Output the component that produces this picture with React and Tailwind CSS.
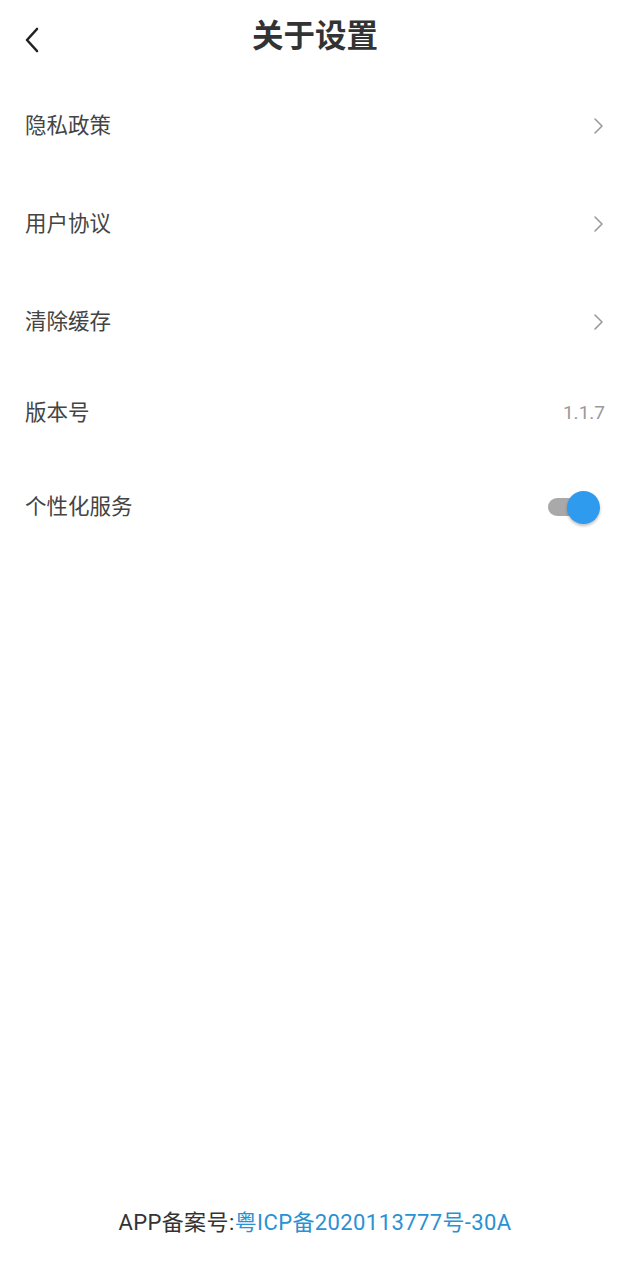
import React, { useState } from "react";

function Chevron() {
  return (
    <svg width="12" height="18" viewBox="0 0 12 18" fill="none">
      <path d="M2 2 L9 9 L2 16" stroke="#9a9a9a" strokeWidth="1.6" strokeLinecap="round" strokeLinejoin="round" />
    </svg>
  );
}

function App() {
  const [on, setOn] = useState(true);

  const links = ["隐私政策", "用户协议", "清除缓存"];

  return (
    <div
      className="w-[630px] min-h-[1280px] bg-white flex flex-col"
      style={{ fontFamily: 'Roboto, "Noto Sans CJK SC", sans-serif' }}
    >
      {/* header */}
      <div className="h-[77px] relative flex items-center justify-center">
        <button className="absolute left-[22px] top-[26px]">
          <svg width="20" height="28" viewBox="0 0 20 28" fill="none">
            <path d="M15 3 L5 14 L15 25" stroke="#222" strokeWidth="2.6" strokeLinecap="round" strokeLinejoin="round" />
          </svg>
        </button>
        <h1 className="text-[31.5px] font-bold text-[#333333] -mt-[3px]">关于设置</h1>
      </div>

      {links.map((t) => (
        <div key={t} className="h-[98px] flex items-center justify-between pl-[25px] pr-[25px]">
          <span className="text-[21.5px] text-[#444444]">{t}</span>
          <Chevron />
        </div>
      ))}

      <div className="h-[84px] flex items-center justify-between pl-[25px] pr-[25px]">
        <span className="text-[21.5px] text-[#444444]">版本号</span>
        <span className="text-[19px] text-[#9a9a9a]">1.1.7</span>
      </div>

      <div className="h-[104px] flex items-center justify-between pl-[25px] pr-[30px]">
        <span className="text-[21.5px] text-[#444444]">个性化服务</span>
        <button
          onClick={() => setOn(!on)}
          className="relative w-[52px] h-[34px] flex items-center"
        >
          <span className="absolute left-0 right-[10px] h-[18px] rounded-full bg-[#a9a9a9]" />
          <span className="absolute right-0 w-[33px] h-[33px] rounded-full bg-[#2e9bef] shadow-[0_2px_3px_rgba(0,0,0,0.25)]" />
        </button>
      </div>

      <div className="flex-1" />

      <div className="pb-[42px] flex justify-center">
        <p className="text-[22px] tracking-[0.4px] leading-[30px] text-[#333333]">
          APP备案号:<span className="text-[#2a91d3]">粤ICP备2020113777号-30A</span>
        </p>
      </div>
    </div>
  );
}

export default App;
